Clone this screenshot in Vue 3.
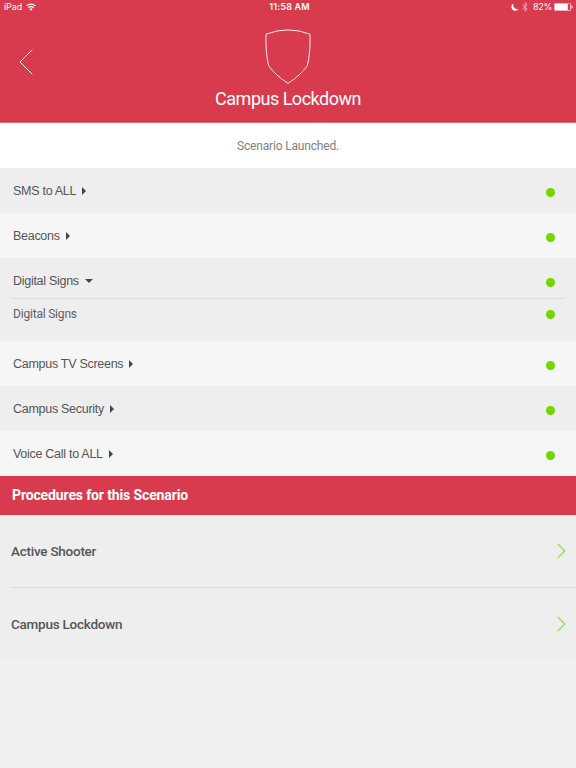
<script setup>
import { ref } from 'vue'

const scenario = ref('Campus Lockdown')

const actions = ref([
  { id: 'sms', name: 'SMS to ALL', open: false, items: [] },
  { id: 'beacons', name: 'Beacons', open: false, items: [] },
  { id: 'signs', name: 'Digital Signs', open: true, items: ['Digital Signs'] },
  { id: 'tv', name: 'Campus TV Screens', open: false, items: [] },
  { id: 'security', name: 'Campus Security', open: false, items: [] },
  { id: 'voice', name: 'Voice Call to ALL', open: false, items: [] }
])

const procedures = ref([
  { id: 'shooter', name: 'Active Shooter' },
  { id: 'lockdown', name: 'Campus Lockdown' }
])

const toggle = (action) => {
  action.open = !action.open
}
</script>

<template>
  <div class="screen">
    <header class="header">
      <div class="status-bar">
        <div class="status-left">
          <span class="device">iPad</span>
          <svg class="wifi" width="10" height="8" viewBox="0 0 10 8" fill="none" stroke="#fff">
            <path d="M0.6 2.9a6.2 6.2 0 0 1 8.8 0" stroke-width="1.3" />
            <path d="M2.3 4.8a3.8 3.8 0 0 1 5.4 0" stroke-width="1.3" />
            <path d="M5 7.8L3.4 6.2a2.2 2.2 0 0 1 3.2 0z" fill="#fff" stroke="none" />
          </svg>
        </div>
        <span class="time">11:58 AM</span>
        <div class="status-right">
          <svg class="moon" width="8" height="8" viewBox="0 0 8 8">
            <path d="M2.6 0.4A3.8 3.8 0 1 0 7.5 5.7A3.9 3.9 0 0 1 2.6 0.4z" fill="#fff" />
          </svg>
          <svg class="bluetooth" width="6" height="10" viewBox="0 0 6 10">
            <path d="M0.6 2.7L5.2 7.2L3 9.3V0.7L5.2 2.8L0.6 7.3" fill="none" stroke="#fff" stroke-width="0.9" />
          </svg>
          <span class="percent">82%</span>
          <svg class="battery" width="19" height="8" viewBox="0 0 19 8">
            <rect x="0.4" y="0.4" width="16.2" height="7.2" rx="1" fill="none" stroke="#fff" stroke-width="0.7" />
            <rect x="1" y="1" width="12.8" height="6" fill="#fff" />
            <path d="M17.5 2.5a1.6 1.6 0 0 1 0 3z" fill="#fff" />
          </svg>
        </div>
      </div>

      <div class="hero">
        <button class="back" aria-label="Back">
          <svg width="14" height="26" viewBox="0 0 14 26">
            <path d="M13.3 0.7L1 13L13.3 25.3" fill="none" stroke="#fff" stroke-width="1" />
          </svg>
        </button>
        <svg class="shield" width="46" height="55" viewBox="0 0 46 55">
          <path
            d="M1 5.2Q23 -3.4 45 5.2Q45.6 23 42.4 36.6Q36 46 23 54.3Q10 46 3.6 36.6Q0.4 23 1 5.2z"
            fill="none"
            stroke="#fff"
            stroke-width="0.9"
          />
        </svg>
      </div>
      <h1>{{ scenario }}</h1>
    </header>

    <p class="message">Scenario Launched.</p>

    <div class="actions">
      <div v-for="action in actions" :key="action.id" class="action">
        <div class="row" @click="toggle(action)">
          <span class="name">{{ action.name }}</span>
          <span class="caret" :class="{ open: action.open }"></span>
          <span class="dot"></span>
        </div>
        <template v-if="action.open">
          <div v-for="item in action.items" :key="item" class="sub-row">
            <span class="name">{{ item }}</span>
            <span class="dot"></span>
          </div>
        </template>
      </div>
    </div>

    <h2>Procedures for this Scenario</h2>

    <div class="procedures">
      <div v-for="procedure in procedures" :key="procedure.id" class="procedure">
        <span class="procedure-name">{{ procedure.name }}</span>
        <svg width="9" height="16" viewBox="0 0 9 16">
          <path d="M0.8 1L7.8 8L0.8 15" fill="none" stroke="#94dc48" stroke-width="1.2" />
        </svg>
      </div>
    </div>
  </div>
</template>

<style>
body {
  background: #f0f0f0;
}
</style>

<style scoped>
.screen {
  min-height: 100vh;
  background: #f0f0f0;
  color: #555557;
  font-family: Roboto, "Liberation Sans", sans-serif;
}

.header {
  box-sizing: border-box;
  height: 123px;
  background: #d83b4d;
  border-bottom: 1px solid #e26a78;
  color: #fff;
}

.status-bar {
  display: grid;
  grid-template-columns: 1fr auto 1fr;
  align-items: center;
  height: 14px;
  padding: 0 3px 0 4px;
  font-family: Inter, sans-serif;
  font-size: 9px;
  line-height: 14px;
}

.status-left,
.status-right {
  display: flex;
  align-items: center;
}

.status-right {
  justify-content: flex-end;
}

.device {
  letter-spacing: -0.1px;
}

.wifi {
  margin-left: 4px;
}

.time {
  font-weight: 600;
  letter-spacing: 0.2px;
  padding-left: 2px;
}

.bluetooth {
  margin-left: 3px;
  opacity: 0.6;
}

.percent {
  margin: 0 2px 0 5px;
  letter-spacing: -0.3px;
}

.hero {
  display: grid;
  grid-template-columns: 1fr auto 1fr;
  padding-top: 15px;
}

.back {
  justify-self: start;
  height: 26px;
  margin: 20px 0 0 19px;
  padding: 0;
  border: none;
  background: none;
  cursor: pointer;
}

.back svg {
  display: block;
}

.shield {
  display: block;
}

h1 {
  margin: 3px 0 0;
  font-size: 18px;
  font-weight: 400;
  line-height: 24px;
  letter-spacing: -0.5px;
  text-align: center;
}

.message {
  margin: 0;
  height: 45px;
  background: #fff;
  color: #808080;
  font-size: 12px;
  line-height: 46px;
  letter-spacing: -0.17px;
  text-align: center;
}

.action {
  background: #eeeeee;
}

.action:nth-child(even) {
  background: #f6f6f6;
}

.row,
.sub-row {
  display: flex;
  align-items: center;
  padding: 0 21px 0 13px;
}

.row {
  height: 45px;
  font-family: "Liberation Sans", Arial, sans-serif;
  font-size: 12.5px;
  letter-spacing: -0.28px;
  cursor: pointer;
}

.row .dot {
  margin-top: 3px;
}

.caret {
  margin-left: 6px;
  border-left: 4.5px solid #454547;
  border-top: 4px solid transparent;
  border-bottom: 4px solid transparent;
}

.caret.open {
  border-top: 4.5px solid #454547;
  border-left: 4px solid transparent;
  border-right: 4px solid transparent;
  border-bottom: none;
}

.dot {
  width: 9px;
  height: 9px;
  margin-left: auto;
  border-radius: 50%;
  background: #72d600;
}

.sub-row {
  box-sizing: border-box;
  height: 43px;
  margin: -5px 11px 0;
  padding: 0 10px 12px 2px;
  border-top: 1px solid #dedede;
  font-size: 12px;
  letter-spacing: -0.2px;
  color: #606062;
}

h2 {
  margin: 0;
  height: 39px;
  padding-left: 12px;
  background: #d83b4d;
  color: #fff;
  font-size: 14px;
  font-weight: 700;
  line-height: 39px;
  letter-spacing: -0.13px;
}

.procedures {
  background: #eeeeee;
}

.procedure {
  display: flex;
  align-items: center;
  justify-content: space-between;
  box-sizing: border-box;
  height: 72px;
  margin-left: 11px;
  padding-right: 10px;
}

.procedure + .procedure {
  border-top: 1px solid #dadada;
}

.procedure-name {
  font-size: 13.5px;
  font-weight: 500;
  letter-spacing: -0.25px;
}
</style>
